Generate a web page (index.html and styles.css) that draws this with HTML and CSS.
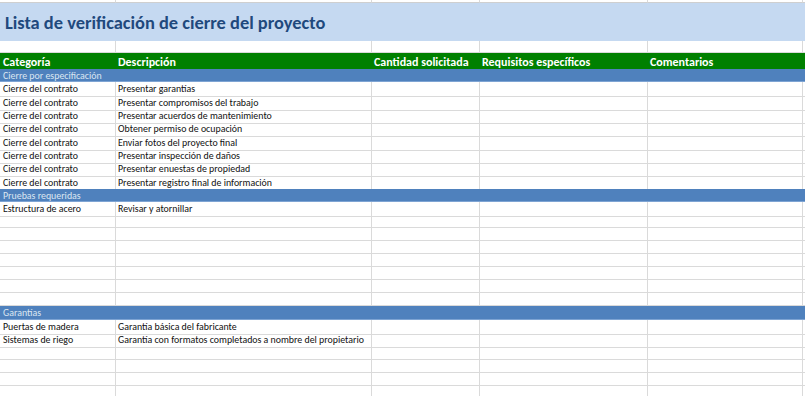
FILE: index.html
```html
<!DOCTYPE html>
<html lang="es">
<head>
<meta charset="utf-8">
<title>Lista de verificación de cierre del proyecto</title>
<link rel="stylesheet" href="styles.css">
</head>
<body>
<div class="sheet">
  <div class="row top"><div class="c"></div><div class="c"></div><div class="c"></div><div class="c"></div><div class="c"></div><div class="c"></div></div>
  <div class="title">Lista de verificación de cierre del proyecto</div>
  <div class="row blank"><div class="c"></div><div class="c"></div><div class="c"></div><div class="c"></div><div class="c"></div><div class="c"></div></div>
  <div class="row head">
    <div class="c">Categoría</div><div class="c">Descripción</div><div class="c">Cantidad solicitada</div><div class="c">Requisitos específicos</div><div class="c">Comentarios</div><div class="c"></div>
  </div>

  <div class="section">Cierre por especificación</div>
  <div class="row"><div class="c">Cierre del contrato</div><div class="c">Presentar garantías</div><div class="c"></div><div class="c"></div><div class="c"></div><div class="c"></div></div>
  <div class="row"><div class="c">Cierre del contrato</div><div class="c">Presentar compromisos del trabajo</div><div class="c"></div><div class="c"></div><div class="c"></div><div class="c"></div></div>
  <div class="row"><div class="c">Cierre del contrato</div><div class="c">Presentar acuerdos de mantenimiento</div><div class="c"></div><div class="c"></div><div class="c"></div><div class="c"></div></div>
  <div class="row"><div class="c">Cierre del contrato</div><div class="c">Obtener permiso de ocupación</div><div class="c"></div><div class="c"></div><div class="c"></div><div class="c"></div></div>
  <div class="row"><div class="c">Cierre del contrato</div><div class="c">Enviar fotos del proyecto final</div><div class="c"></div><div class="c"></div><div class="c"></div><div class="c"></div></div>
  <div class="row"><div class="c">Cierre del contrato</div><div class="c">Presentar inspección de daños</div><div class="c"></div><div class="c"></div><div class="c"></div><div class="c"></div></div>
  <div class="row"><div class="c">Cierre del contrato</div><div class="c">Presentar enuestas de propiedad</div><div class="c"></div><div class="c"></div><div class="c"></div><div class="c"></div></div>
  <div class="row"><div class="c">Cierre del contrato</div><div class="c">Presentar registro final de información</div><div class="c"></div><div class="c"></div><div class="c"></div><div class="c"></div></div>

  <div class="section">Pruebas requeridas</div>
  <div class="row r13"><div class="c">Estructura de acero</div><div class="c">Revisar y atornillar</div><div class="c"></div><div class="c"></div><div class="c"></div><div class="c"></div></div>
  <div class="row r13"><div class="c"></div><div class="c"></div><div class="c"></div><div class="c"></div><div class="c"></div><div class="c"></div></div>
  <div class="row r13"><div class="c"></div><div class="c"></div><div class="c"></div><div class="c"></div><div class="c"></div><div class="c"></div></div>
  <div class="row r13"><div class="c"></div><div class="c"></div><div class="c"></div><div class="c"></div><div class="c"></div><div class="c"></div></div>
  <div class="row r13"><div class="c"></div><div class="c"></div><div class="c"></div><div class="c"></div><div class="c"></div><div class="c"></div></div>
  <div class="row r13"><div class="c"></div><div class="c"></div><div class="c"></div><div class="c"></div><div class="c"></div><div class="c"></div></div>
  <div class="row r13"><div class="c"></div><div class="c"></div><div class="c"></div><div class="c"></div><div class="c"></div><div class="c"></div></div>
  <div class="row r13"><div class="c"></div><div class="c"></div><div class="c"></div><div class="c"></div><div class="c"></div><div class="c"></div></div>

  <div class="section">Garantías</div>
  <div class="row"><div class="c">Puertas de madera</div><div class="c">Garantía básica del fabricante</div><div class="c"></div><div class="c"></div><div class="c"></div><div class="c"></div></div>
  <div class="row"><div class="c">Sistemas de riego</div><div class="c">Garantía con formatos completados a nombre del propietario</div><div class="c"></div><div class="c"></div><div class="c"></div><div class="c"></div></div>
  <div class="row"><div class="c"></div><div class="c"></div><div class="c"></div><div class="c"></div><div class="c"></div><div class="c"></div></div>
  <div class="row"><div class="c"></div><div class="c"></div><div class="c"></div><div class="c"></div><div class="c"></div><div class="c"></div></div>
  <div class="row"><div class="c"></div><div class="c"></div><div class="c"></div><div class="c"></div><div class="c"></div><div class="c"></div></div>
  <div class="row"><div class="c"></div><div class="c"></div><div class="c"></div><div class="c"></div><div class="c"></div><div class="c"></div></div>
</div>
</body>
</html>
```

FILE: styles.css
```css
html, body {
  margin: 0;
  padding: 0;
  background: #ffffff;
}
body {
  font-family: Carlito, Calibri, Lato, "Liberation Sans", sans-serif;
  overflow: hidden;
}
.sheet {
  width: 805px;
  display: flex;
  flex-direction: column;
}
.row {
  display: grid;
  grid-template-columns: 116px 256px 108px 168px 155px 1fr;
  height: 13.333px;
  font-size: 9.9px;
  line-height: 13px;
  color: #111;
}
.row.r13 {
  height: 13px;
}
.c {
  box-sizing: border-box;
  border-right: 1px solid #dadada;
  border-bottom: 1px solid #dadada;
  padding: 1px 0 0 2px;
  white-space: nowrap;
  overflow: visible;
}
.c:first-child {
  padding-left: 3px;
}
.row.top {
  height: 3px;
}
.row.top .c {
  border-bottom-color: #cfcfcf;
}
.title {
  box-sizing: border-box;
  height: 38px;
  background: #c5d9f1;
  color: #1f497d;
  font-size: 18.4px;
  font-weight: bold;
  line-height: 18px;
  padding: 11px 0 0 5px;
  white-space: nowrap;
}
.row.blank {
  height: 12px;
}
.row.head {
  height: 16px;
  background: #008000;
  color: #ffffff;
  font-size: 12px;
  font-weight: bold;
  line-height: 14px;
}
.row.head .c {
  border: none;
  padding-top: 2px;
}
.section {
  box-sizing: border-box;
  height: 13.333px;
  background: #4f81bd;
  color: #dce6f1;
  font-size: 9.9px;
  line-height: 12px;
  padding: 1px 0 0 3px;
  border-bottom: 1px solid #7ea4d3;
  white-space: nowrap;
}
```
